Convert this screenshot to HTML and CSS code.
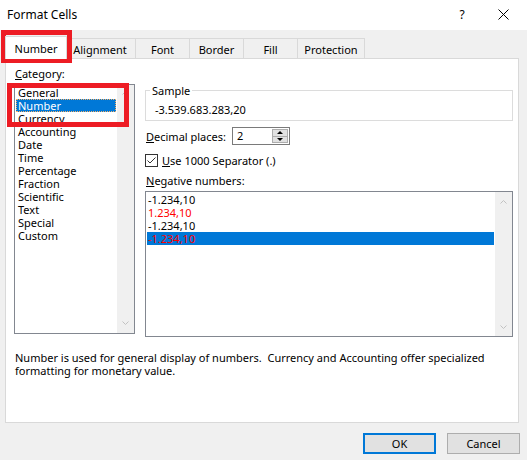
FILE: index.html
```html
<!DOCTYPE html>
<html lang="en">
<head>
  <meta charset="UTF-8">
  <title>Format Cells</title>
  <link rel="stylesheet" href="styles.css">
</head>
<body>
  <div class="dialog">
    <div class="titlebar">
      <span class="title">Format Cells</span>
      <span class="help">?</span>
      <span class="close">
        <svg width="11" height="11" viewBox="0 0 11 11"><path d="M0.5 0.5L10.5 10.5M10.5 0.5L0.5 10.5" stroke="#000" stroke-width="1" fill="none"/></svg>
      </span>
    </div>

    <div class="tabs">
      <div class="tab tab-number active">Number</div>
      <div class="tab tab-alignment">Alignment</div>
      <div class="tab tab-font">Font</div>
      <div class="tab tab-border">Border</div>
      <div class="tab tab-fill">Fill</div>
      <div class="tab tab-protection">Protection</div>
    </div>

    <div class="panel">
      <div class="columns">
        <div class="category">
          <div class="label"><u>C</u>ategory:</div>
          <div class="listbox cat-list">
            <ul class="items">
              <li>General</li>
              <li class="selected focused">Number</li>
              <li>Currency</li>
              <li>Accounting</li>
              <li>Date</li>
              <li>Time</li>
              <li>Percentage</li>
              <li>Fraction</li>
              <li>Scientific</li>
              <li>Text</li>
              <li>Special</li>
              <li>Custom</li>
            </ul>
            <div class="scrollbar cat-scroll">
              <svg width="7" height="4" viewBox="0 0 7 4"><path d="M0.5 3.5L3.5 0.5L6.5 3.5" stroke="#c2c2c2" fill="none"/></svg>
              <svg width="7" height="4" viewBox="0 0 7 4"><path d="M0.5 0.5L3.5 3.5L6.5 0.5" stroke="#c2c2c2" fill="none"/></svg>
            </div>
          </div>
        </div>

        <div class="options">
          <fieldset class="sample">
            <legend>Sample</legend>
            <div class="sample-value">-3.539.683.283,20</div>
          </fieldset>

          <div class="decimal-row">
            <span class="decimal-label"><u>D</u>ecimal places:</span>
            <div class="spinner">
              <span class="spinner-value">2</span>
              <div class="spin">
                <span class="spin-btn"><i class="tri-up"></i></span>
                <span class="spin-btn"><i class="tri-down"></i></span>
              </div>
            </div>
          </div>

          <div class="check-row">
            <span class="checkbox">
              <svg width="11" height="11" viewBox="0 0 11 11"><path d="M1.5 5.5L4 8L9.5 2.5" stroke="#333" stroke-width="1" fill="none"/></svg>
            </span>
            <span><u>U</u>se 1000 Separator (.)</span>
          </div>

          <div class="label neg-label"><u>N</u>egative numbers:</div>
          <div class="listbox neg-list">
            <ul class="items">
              <li>-1.234,10</li>
              <li class="red">1.234,10</li>
              <li>-1.234,10</li>
              <li class="red selected">-1.234,10</li>
            </ul>
            <div class="scrollbar neg-scroll">
              <svg width="7" height="4" viewBox="0 0 7 4"><path d="M0.5 3.5L3.5 0.5L6.5 3.5" stroke="#c2c2c2" fill="none"/></svg>
              <svg width="7" height="4" viewBox="0 0 7 4"><path d="M0.5 0.5L3.5 3.5L6.5 0.5" stroke="#c2c2c2" fill="none"/></svg>
            </div>
          </div>
        </div>
      </div>

      <p class="desc">Number is used for general display of numbers.&nbsp; Currency and Accounting offer specialized<br>formatting for monetary value.</p>
    </div>

    <div class="buttons">
      <button class="btn btn-default">OK</button>
      <button class="btn">Cancel</button>
    </div>

    <!-- red highlight marks drawn over the screenshot -->
    <div class="mark mark-tab"></div>
    <div class="mark mark-list"></div>
  </div>
</body>
</html>
```

FILE: styles.css
```css
*{
  margin: 0;
  padding: 0;
  box-sizing: border-box;
}
body{
  width: 527px;
  height: 460px;
  overflow: hidden;
  background: #f0f0f0;
  font-family: "Noto Sans", "Liberation Sans", sans-serif;
  font-size: 11px;
  color: #000;
}
.dialog{
  position: relative;
  height: 460px;
}

/* title bar */
.titlebar{
  height: 30px;
  background: #fff;
  display: flex;
  align-items: center;
  padding: 0 9px 2px 7px;
}
.title{
  flex: 1;
  font-size: 12px;
}
.help{
  width: 30px;
  text-align: center;
  font-size: 12px;
  margin-right: 11px;
}
.close{
  width: 30px;
  display: flex;
  justify-content: center;
}

/* tabs */
.tabs{
  display: flex;
  align-items: flex-end;
  height: 22px;
  margin-top: 6px;
  padding-left: 7px;
}
.tab{
  height: 20px;
  border: 1px solid #d9d9d9;
  border-right: none;
  border-bottom: none;
  display: flex;
  align-items: center;
  justify-content: center;
  padding-top: 1px;
}
.tab.active{
  height: 23px;
  margin: 0 -2px -1px -2px;
  background: #fff;
  border-right: 1px solid #d9d9d9;
  position: relative;
  z-index: 1;
}
.tab-number{ width: 62px; }
.tab-alignment{ width: 70px; border-left: none; }
.tab-font{ width: 54px; }
.tab-border{ width: 54px; }
.tab-fill{ width: 54px; }
.tab-protection{ width: 68px; border-right: 1px solid #d9d9d9; }

/* main panel */
.panel{
  height: 365px;
  margin: 0 8px 0 5px;
  background: #fff;
  border: 1px solid #d9d9d9;
  padding: 7px 0 0 8px;
}
.columns{
  display: flex;
  align-items: flex-start;
  gap: 10px;
}
.category{
  width: 121px;
}
.label{
  line-height: 16px;
  padding-left: 1px;
}
.cat-list{
  margin-top: 2px;
  height: 250px;
}
.options{
  width: 368px;
  padding-top: 18px;
}

.listbox{
  border: 1px solid #828790;
  background: #fff;
  display: flex;
}
.items{
  flex: 1;
  list-style: none;
  padding: 1px;
}
.items li{
  height: 13px;
  line-height: 13px;
  padding-left: 2px;
  white-space: nowrap;
}
.items li.selected{
  background: #0078d7;
  color: #fff;
}
.items li.focused{
  outline: 1px dotted #f4b26a;
  outline-offset: -1px;
}
.items li.red{
  color: #ff0000;
}
.scrollbar{
  width: 17px;
  background: #f0f0f0;
  display: flex;
  flex-direction: column;
  justify-content: space-between;
  align-items: center;
}
.scrollbar svg{
  display: block;
}
.cat-scroll{
  padding: 6px 0 8px;
}
.neg-scroll{
  padding: 8px 0 7px;
}

/* sample group */
.sample{
  border: 1px solid #dcdcdc;
  padding: 0 0 2px 4px;
  min-width: 0;
}
.sample legend{
  padding: 0 2px;
  line-height: 13px;
  font-size: 11px;
}
.sample-value{
  margin: 5px 0 0 5px;
  line-height: 16px;
}

/* decimal places */
.decimal-row{
  display: flex;
  align-items: center;
  height: 18px;
  margin-top: 6px;
}
.decimal-label{
  width: 87px;
  padding-left: 1px;
}
.spinner{
  width: 58px;
  height: 18px;
  border: 1px solid #7a7a7a;
  background: #fff;
  display: flex;
}
.spinner-value{
  flex: 1;
  padding-left: 4px;
  line-height: 16px;
}
.spin{
  width: 17px;
  display: flex;
  flex-direction: column;
  padding: 1px 1px 1px 0;
}
.spin-btn{
  flex: 1;
  background: #e1e1e1;
  border: 1px solid #adadad;
  display: flex;
  align-items: center;
  justify-content: center;
}
.spin-btn + .spin-btn{
  border-top: none;
}
.tri-up{
  border-left: 3px solid transparent;
  border-right: 3px solid transparent;
  border-bottom: 3px solid #000;
}
.tri-down{
  border-left: 3px solid transparent;
  border-right: 3px solid transparent;
  border-top: 3px solid #000;
}

/* separator checkbox */
.check-row{
  display: flex;
  align-items: center;
  gap: 4px;
  height: 13px;
  margin-top: 9px;
}
.checkbox{
  width: 13px;
  height: 13px;
  border: 1px solid #333;
  background: #fff;
  display: flex;
}

.neg-label{
  margin-top: 6px;
}
.neg-list{
  margin-top: 2px;
  height: 146px;
}
.neg-list .items li{
  padding-left: 1px;
}

.desc{
  margin-top: 14px;
  line-height: 13px;
  padding-left: 1px;
}

/* buttons */
.buttons{
  display: flex;
  justify-content: flex-end;
  gap: 11px;
  padding-right: 7px;
  margin-top: 10px;
}
.btn{
  width: 73px;
  height: 21px;
  background: #e1e1e1;
  border: 1px solid #adadad;
  font-family: inherit;
  font-size: 11px;
  color: #000;
}
.btn-default{
  border: 2px solid #0078d7;
}

/* red annotation boxes */
.mark{
  position: absolute;
  border: 5px solid #ed1c24;
}
.mark-tab{
  left: 1px;
  top: 30px;
  width: 71px;
  height: 33px;
}
.mark-list{
  left: 7px;
  top: 83px;
  width: 122px;
  height: 44px;
}
```
